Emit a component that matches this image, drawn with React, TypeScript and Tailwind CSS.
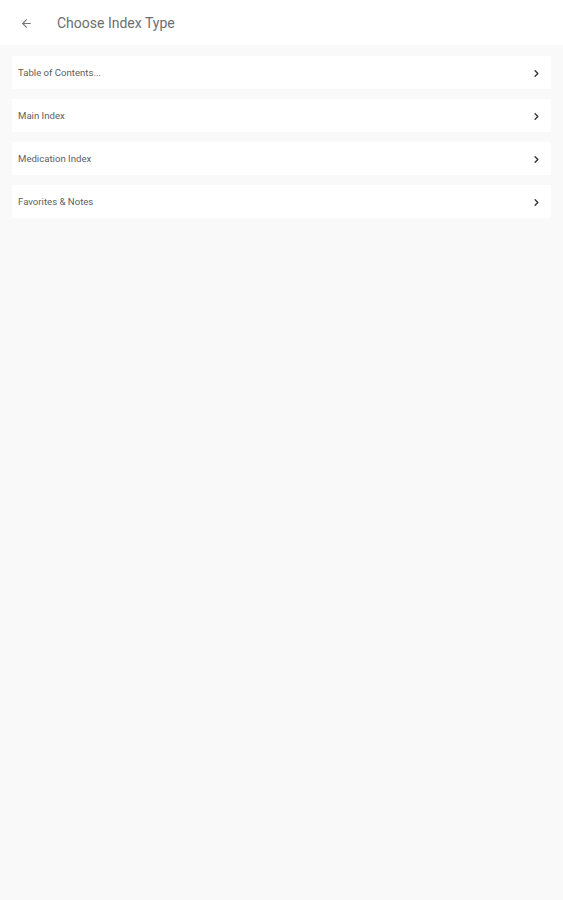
import { ChevronRight, ArrowLeft } from 'lucide-react'

const items = ['Table of Contents...', 'Main Index', 'Medication Index', 'Favorites & Notes']

export default function App() {
  return (
    <div className="min-h-[900px] bg-[#f9f9f9] font-['Roboto',sans-serif]">
      <header className="flex h-[45px] items-center bg-white pt-[1px]">
        <ArrowLeft className="ml-[20px] h-[13px] w-[13px] text-[#777]" strokeWidth={2} />
        <h1 className="ml-[24px] text-[14px] text-[#6e6e6e]">Choose Index Type</h1>
      </header>
      <ul className="flex flex-col gap-[10px] px-[12px] pt-[11px]">
        {items.map((item) => (
          <li key={item} className="flex h-[33px] items-center justify-between bg-white pl-[6px] pr-[9px] pt-[1px]">
            <span className="text-[9.6px] text-[#606060]">{item}</span>
            <ChevronRight className="h-[11px] w-[11px] text-[#333]" strokeWidth={3} />
          </li>
        ))}
      </ul>
    </div>
  )
}
